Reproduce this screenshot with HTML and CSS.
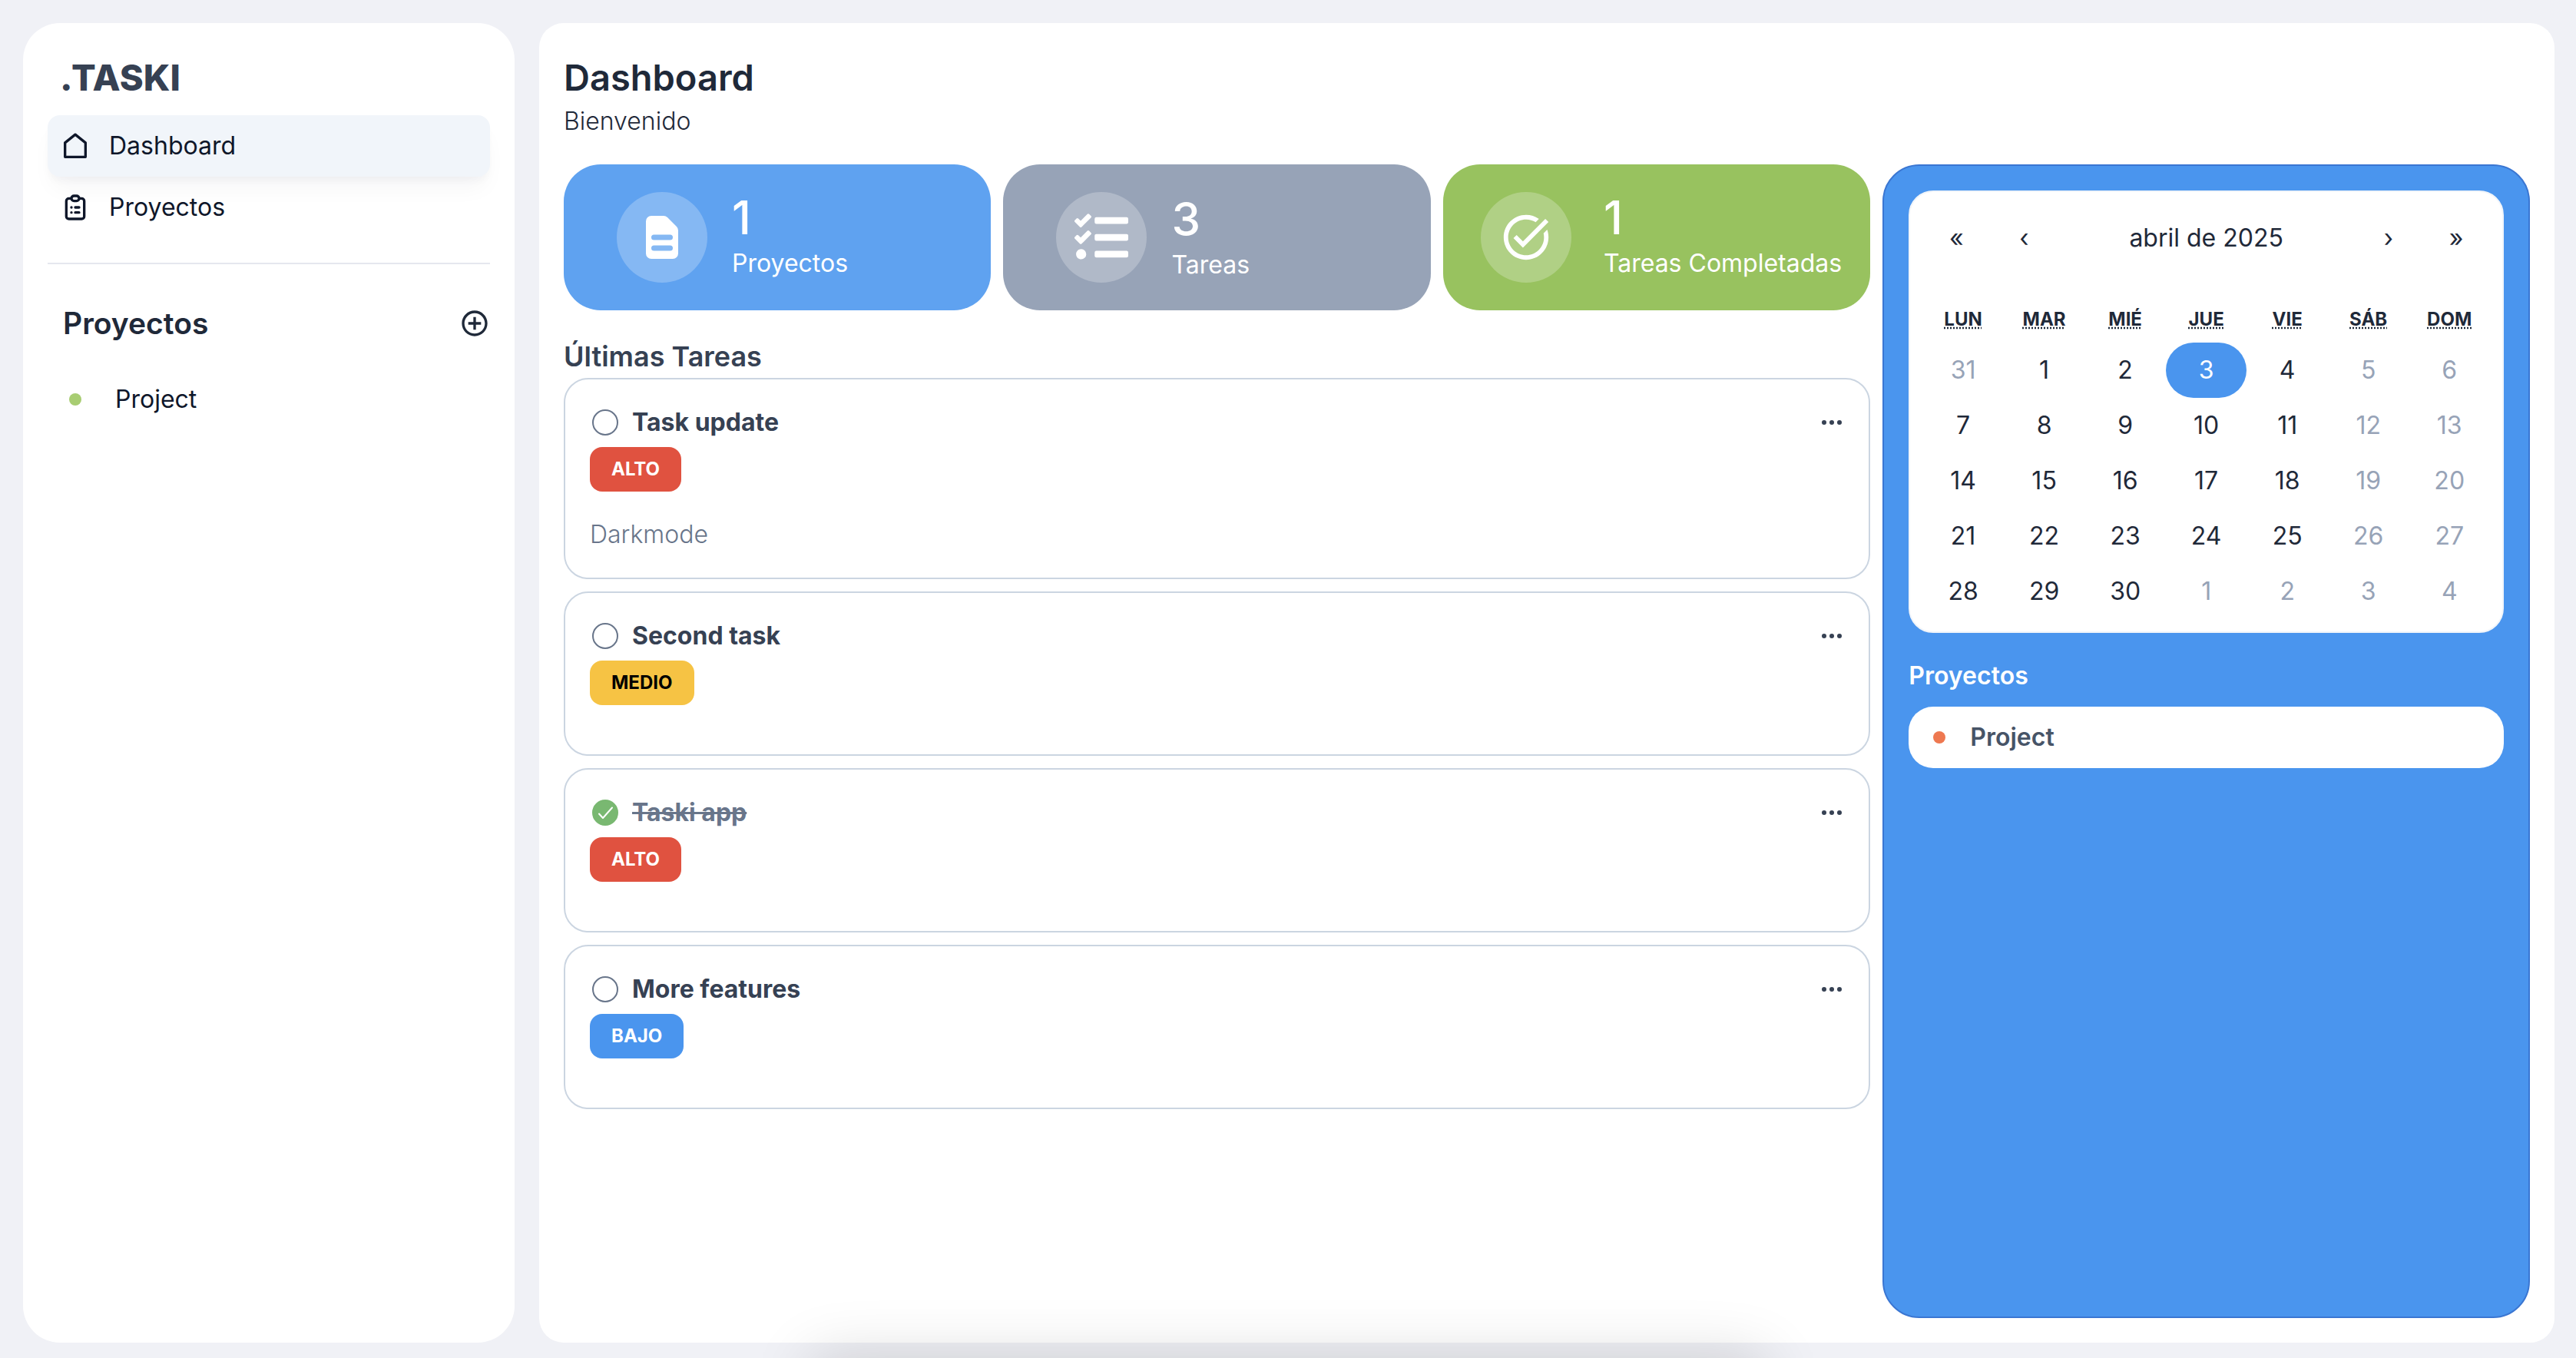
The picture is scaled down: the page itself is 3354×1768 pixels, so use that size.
FILE: index.html
```html
<!DOCTYPE html>
<html lang="es">
<head>
<meta charset="utf-8">
<meta name="viewport" content="width=device-width, initial-scale=1">
<title>Taski - Dashboard</title>
<link rel="stylesheet" href="styles.css">
</head>
<body>
<div class="app">
  <aside class="sidebar">
    <p class="logo">.TASKI</p>
    <nav class="nav">
      <a class="nav-link nav-link-active" href="#dashboard">
        <svg class="icon" viewBox="0 0 24 24" fill="none" stroke="currentColor" stroke-width="2" stroke-linejoin="round"><path d="M4 9.5V20.6h16V9.5L12 3.100z"/></svg>
        Dashboard
      </a>
      <a class="nav-link" href="#proyectos">
        <svg class="icon" viewBox="0 0 24 24" fill="none" stroke="currentColor" stroke-width="2" stroke-linecap="round" stroke-linejoin="round"><path d="M9 5H7a2 2 0 00-2 2v12a2 2 0 002 2h10a2 2 0 002-2V7a2 2 0 00-2-2h-2M9 5a2 2 0 002 2h2a2 2 0 002-2M9 5a2 2 0 012-2h2a2 2 0 012 2m-3 7h3m-3 4h3m-6-4h.01M9 16h.01"/></svg>
        Proyectos
      </a>
    </nav>
    <hr class="divider">
    <div class="side-head">
      <h2 class="side-title">Proyectos</h2>
      <button class="icon-btn" type="button" aria-label="Nuevo proyecto">
        <svg class="icon" viewBox="0 0 24 24" fill="currentColor"><path d="M13 7h-2v4H7v2h4v4h2v-4h4v-2h-4V7zm-1-5C6.480 2 2 6.480 2 12s4.480 10 10 10 10-4.480 10-10S17.520 2 12 2zm0 18c-4.410 0-8-3.590-8-8s3.590-8 8-8 8 3.590 8 8-3.590 8-8 8z"/></svg>
      </button>
    </div>
    <a class="side-project" href="#project"><span class="dot dot-green"></span>Project</a>
  </aside>

  <main class="main">
    <header class="header">
      <h1 class="title">Dashboard</h1>
      <p class="welcome">Bienvenido</p>
    </header>
    <div class="columns">
      <div class="left">
        <section class="stats">
          <div class="stat stat-blue">
            <span class="stat-icon"><svg viewBox="0 0 20 20" fill="currentColor"><path fill-rule="evenodd" d="M4 4a2 2 0 012-2h4.586A2 2 0 0112 2.586L15.414 6A2 2 0 0116 7.414V16a2 2 0 01-2 2H6a2 2 0 01-2-2V4zm2 6a1 1 0 011-1h6a1 1 0 110 2H7a1 1 0 01-1-1zm1 3a1 1 0 100 2h6a1 1 0 100-2H7z"/></svg></span>
            <div class="stat-text"><p class="stat-num">1</p><p class="stat-label">Proyectos</p></div>
          </div>
          <div class="stat stat-gray">
            <span class="stat-icon"><svg viewBox="0 0 512 512" fill="currentColor"><path d="M139.610 35.500a12 12 0 0 0-17 0L58.930 98.810l-22.700-22.120a12 12 0 0 0-17 0L3.530 92.410a12 12 0 0 0 0 17l47.590 47.400a12.780 12.780 0 0 0 17.610 0l15.590-15.620L156.520 69a12.090 12.090 0 0 0 .09-17zm0 159.190a12 12 0 0 0-17 0l-63.680 63.720-22.700-22.100a12 12 0 0 0-17 0L3.530 252a12 12 0 0 0 0 17L51 316.500a12.770 12.770 0 0 0 17.600 0l15.700-15.690 72.200-72.220a12 12 0 0 0 .09-16.900zM64 368c-26.490 0-48.590 21.500-48.590 48S37.530 464 64 464a48 48 0 0 0 0-96zm432 16H208a16 16 0 0 0-16 16v32a16 16 0 0 0 16 16h288a16 16 0 0 0 16-16v-32a16 16 0 0 0-16-16zm0-320H208a16 16 0 0 0-16 16v32a16 16 0 0 0 16 16h288a16 16 0 0 0 16-16V80a16 16 0 0 0-16-16zm0 160H208a16 16 0 0 0-16 16v32a16 16 0 0 0 16 16h288a16 16 0 0 0 16-16v-32a16 16 0 0 0-16-16z"/></svg></span>
            <div><p class="stat-num">3</p><p class="stat-label">Tareas</p></div>
          </div>
          <div class="stat stat-green">
            <span class="stat-icon"><svg viewBox="0 0 24 24" fill="currentColor"><path d="M22 5.180 10.590 16.600l-4.240-4.240 1.410-1.410 2.830 2.830 10-10L22 5.180zm-2.210 5.040c.13.57.21 1.170.21 1.780 0 4.420-3.580 8-8 8s-8-3.580-8-8 3.580-8 8-8c1.580 0 3.040.46 4.280 1.250l1.440-1.440A9.900 9.900 0 0 0 12 2C6.480 2 2 6.480 2 12s4.480 10 10 10 10-4.480 10-10c0-1.190-.22-2.330-.6-3.390l-1.610 1.610z"/></svg></span>
            <div class="stat-text"><p class="stat-num">1</p><p class="stat-label">Tareas Completadas</p></div>
          </div>
        </section>

        <h2 class="section-title">Últimas Tareas</h2>
        <div class="tasks">
          <article class="task">
            <div class="task-head">
              <input class="check" type="checkbox" id="t1"><label class="task-name" for="t1">Task update</label>
              <button class="icon-btn more" type="button" aria-label="Opciones"><svg class="dots" viewBox="0 0 16 16" fill="currentColor"><circle cx="3" cy="8" r="1.500"/><circle cx="8" cy="8" r="1.500"/><circle cx="13" cy="8" r="1.500"/></svg></button>
            </div>
            <span class="badge badge-high">ALTO</span>
            <p class="task-text">Darkmode</p>
          </article>
          <article class="task">
            <div class="task-head">
              <input class="check" type="checkbox" id="t2"><label class="task-name" for="t2">Second task</label>
              <button class="icon-btn more" type="button" aria-label="Opciones"><svg class="dots" viewBox="0 0 16 16" fill="currentColor"><circle cx="3" cy="8" r="1.500"/><circle cx="8" cy="8" r="1.500"/><circle cx="13" cy="8" r="1.500"/></svg></button>
            </div>
            <span class="badge badge-mid">MEDIO</span>
            <p class="task-text"></p>
          </article>
          <article class="task">
            <div class="task-head">
              <span class="check-wrap">
                <input class="check" type="checkbox" id="t3" checked>
                <svg class="check-mark" viewBox="0 0 34 34" fill="none" stroke="currentColor" stroke-width="2" stroke-linecap="round" stroke-linejoin="round"><path d="M9 18.500l5 5.500L26 10.500"/></svg>
              </span><label class="task-name" for="t3">Taski app</label>
              <button class="icon-btn more" type="button" aria-label="Opciones"><svg class="dots" viewBox="0 0 16 16" fill="currentColor"><circle cx="3" cy="8" r="1.500"/><circle cx="8" cy="8" r="1.500"/><circle cx="13" cy="8" r="1.500"/></svg></button>
            </div>
            <span class="badge badge-high">ALTO</span>
            <p class="task-text"></p>
          </article>
          <article class="task">
            <div class="task-head">
              <input class="check" type="checkbox" id="t4"><label class="task-name" for="t4">More features</label>
              <button class="icon-btn more" type="button" aria-label="Opciones"><svg class="dots" viewBox="0 0 16 16" fill="currentColor"><circle cx="3" cy="8" r="1.500"/><circle cx="8" cy="8" r="1.500"/><circle cx="13" cy="8" r="1.500"/></svg></button>
            </div>
            <span class="badge badge-low">BAJO</span>
            <p class="task-text"></p>
          </article>
        </div>
      </div>

      <aside class="panel">
        <div class="calendar">
          <div class="cal-nav">
            <button class="cal-btn" type="button" aria-label="Año anterior">«</button>
            <button class="cal-btn" type="button" aria-label="Mes anterior">‹</button>
            <button class="cal-label" type="button">abril de 2025</button>
            <button class="cal-btn" type="button" aria-label="Mes siguiente">›</button>
            <button class="cal-btn" type="button" aria-label="Año siguiente">»</button>
          </div>
          <table class="cal-table">
            <thead><tr>
              <th><abbr title="lunes">LUN</abbr></th><th><abbr title="martes">MAR</abbr></th><th><abbr title="miércoles">MIÉ</abbr></th><th><abbr title="jueves">JUE</abbr></th><th><abbr title="viernes">VIE</abbr></th><th><abbr title="sábado">SÁB</abbr></th><th><abbr title="domingo">DOM</abbr></th>
            </tr></thead>
            <tbody>
              <tr><td><button class="day dim" type="button">31</button></td><td><button class="day" type="button">1</button></td><td><button class="day" type="button">2</button></td><td><button class="day today" type="button">3</button></td><td><button class="day" type="button">4</button></td><td><button class="day dim" type="button">5</button></td><td><button class="day dim" type="button">6</button></td></tr>
              <tr><td><button class="day" type="button">7</button></td><td><button class="day" type="button">8</button></td><td><button class="day" type="button">9</button></td><td><button class="day" type="button">10</button></td><td><button class="day" type="button">11</button></td><td><button class="day dim" type="button">12</button></td><td><button class="day dim" type="button">13</button></td></tr>
              <tr><td><button class="day" type="button">14</button></td><td><button class="day" type="button">15</button></td><td><button class="day" type="button">16</button></td><td><button class="day" type="button">17</button></td><td><button class="day" type="button">18</button></td><td><button class="day dim" type="button">19</button></td><td><button class="day dim" type="button">20</button></td></tr>
              <tr><td><button class="day" type="button">21</button></td><td><button class="day" type="button">22</button></td><td><button class="day" type="button">23</button></td><td><button class="day" type="button">24</button></td><td><button class="day" type="button">25</button></td><td><button class="day dim" type="button">26</button></td><td><button class="day dim" type="button">27</button></td></tr>
              <tr><td><button class="day" type="button">28</button></td><td><button class="day" type="button">29</button></td><td><button class="day" type="button">30</button></td><td><button class="day dim" type="button">1</button></td><td><button class="day dim" type="button">2</button></td><td><button class="day dim" type="button">3</button></td><td><button class="day dim" type="button">4</button></td></tr>
            </tbody>
          </table>
        </div>
        <h2 class="panel-title">Proyectos</h2>
        <a class="panel-project" href="#project"><span class="dot dot-orange"></span>Project</a>
      </aside>
    </div>
  </main>
</div>
<div class="tray"></div>
</body>
</html>
```

FILE: styles.css
```css
* {
  box-sizing: border-box;
  margin: 0;
  padding: 0;
}

body {
  background: #f0f1f6;
  color: #0f172a;
  font: 400 32px/48px Inter, "Liberation Sans", sans-serif;
}

a {
  color: inherit;
  text-decoration: none;
}

button {
  background: none;
  border: 0;
  color: inherit;
  font: inherit;
  cursor: pointer;
}

.app {
  display: grid;
  grid-template-columns: 640px 1fr;
  gap: 32px;
  min-height: 100vh;
  padding: 30px 28px 20px 30px;
}

/* Sidebar */
.sidebar {
  background: #fff;
  border-radius: 48px;
  padding: 32px;
}

.logo {
  padding-left: 16px;
  margin-bottom: 10px;
  color: #364153;
  font-size: 47px;
  font-weight: 800;
  line-height: 78px;
}

.nav-link {
  display: flex;
  align-items: center;
  gap: 24px;
  height: 80px;
  padding: 0 16px;
  border-radius: 16px;
}

.nav-link-active {
  background: #f1f5fa;
  box-shadow: 0 20px 30px -6px rgba(15, 23, 42, .04), 0 8px 12px -4px rgba(15, 23, 42, .04);
}

.icon {
  display: block;
  width: 40px;
  height: 40px;
}

.divider {
  height: 2px;
  margin: 32px 0;
  border: 0;
  background: #e5e7ee;
}

.side-head {
  display: flex;
  align-items: center;
  justify-content: space-between;
  height: 90px;
  margin-bottom: 14px;
  padding-left: 20px;
  color: #1f2939;
}

.side-title {
  font-size: 39px;
  font-weight: 600;
}

.side-project {
  display: flex;
  align-items: center;
  gap: 44px;
  height: 80px;
  padding: 0 28px;
}

.dot {
  flex: none;
  width: 16px;
  height: 16px;
  border-radius: 50%;
}

.dot-green {
  background: #a8cd72;
}

.dot-orange {
  background: #ee7850;
}

/* Main */
.main {
  display: flex;
  flex-direction: column;
  background: #fff;
  border-radius: 32px;
  padding: 32px;
}

.header {
  margin-bottom: 38px;
  color: #1f2939;
}

.title {
  font-size: 47px;
  font-weight: 600;
  line-height: 78px;
}

.welcome {
  font-weight: 300;
  line-height: 36px;
}

.columns {
  display: grid;
  flex: 1;
  grid-template-columns: repeat(3, 1fr);
  gap: 16px;
}

.left {
  grid-column: span 2;
}

.stats {
  display: grid;
  grid-template-columns: repeat(3, 1fr);
  gap: 16px;
}

.stat {
  display: flex;
  align-items: center;
  gap: 32px;
  height: 190px;
  padding-left: 69px;
  border-radius: 48px;
  color: #fff;
}

.stat-blue {
  background: #5fa2f0;
}

.stat-gray {
  background: #97a3b7;
}

.stat-green {
  gap: 42px;
  padding-left: 49px;
  background: #98c25f;
}

.stat-icon {
  display: grid;
  flex: none;
  place-items: center;
  width: 118px;
  height: 118px;
  border-radius: 50%;
  background: rgba(255, 255, 255, .24);
}

.stat-icon svg {
  width: 70px;
  height: 70px;
}

.stat-text {
  padding-bottom: 4px;
}

.stat-num {
  font-size: 60px;
  font-weight: 500;
  line-height: 72px;
}

.stat-label {
  white-space: nowrap;
}

.section-title {
  margin-top: 34px;
  margin-bottom: 2px;
  color: #364153;
  font-size: 36px;
  font-weight: 600;
  line-height: 52px;
}

.tasks {
  display: grid;
  gap: 16px;
}

.task {
  padding: 32px;
  border: 2px solid #cbd5e1;
  border-radius: 32px;
}

.task-head {
  display: flex;
  align-items: center;
  gap: 18px;
  padding-left: 3px;
  color: #364153;
}

.check {
  display: block;
  flex: none;
  width: 34px;
  height: 34px;
  appearance: none;
  border: 2px solid #68758a;
  border-radius: 50%;
}

.check:checked {
  border-color: #79b871;
  background: #79b871;
}

.check-wrap {
  position: relative;
}

.check-mark {
  position: absolute;
  inset: 0;
  color: #fff;
  pointer-events: none;
}

.task-name {
  font-weight: 700;
}

.check-wrap:has(:checked) + .task-name {
  color: #68758a;
  text-decoration: line-through;
}

.more {
  margin-left: auto;
}

.dots {
  display: block;
  width: 32px;
  height: 32px;
}

.badge {
  display: block;
  width: fit-content;
  margin-top: 8px;
  padding: 0 28px;
  border-radius: 16px;
  color: #fff;
  font-size: 24px;
  font-weight: 700;
  line-height: 58px;
}

.badge-high {
  background: #e05240;
}

.badge-mid {
  background: #f6c344;
  color: #000;
}

.badge-low {
  background: #4a95ee;
}

.task-text {
  min-height: 0;
  margin-top: 32px;
  color: #68758a;
  font-weight: 300;
}

/* Right panel */
.panel {
  padding: 32px;
  border: 2px solid #3a76d2;
  border-radius: 48px;
  background: #4a95ee;
}

.calendar {
  padding: 16px;
  border: 2px solid #f1f5fa;
  border-radius: 32px;
  background: #fff;
  color: #1f2939;
}

.cal-nav {
  display: flex;
  height: 88px;
  margin-bottom: 32px;
}

.cal-btn {
  width: 88px;
}

.cal-label {
  flex: 1;
}

.cal-table {
  width: 100%;
  table-layout: fixed;
  border-collapse: collapse;
}

.cal-table th {
  height: 60px;
  font-size: 24px;
  font-weight: 700;
  line-height: 36px;
}

.day {
  display: block;
  width: 100%;
  height: 72px;
  border-radius: 36px;
}

.dim {
  color: #97a3b7;
}

.today {
  background: #4a95ee;
  color: #fff;
}

.panel-title {
  margin: 32px 0 16px;
  color: #fff;
  font-size: 32px;
  font-weight: 600;
}

.panel-project {
  display: flex;
  align-items: center;
  gap: 32px;
  height: 80px;
  padding: 0 32px;
  border-radius: 32px;
  background: #fff;
  color: #475467;
  font-weight: 600;
}

/* Tray parked below the window; only its shadow shows */
.tray {
  position: fixed;
  top: 100%;
  left: 50%;
  width: 1240px;
  height: 160px;
  margin-left: -620px;
  box-shadow: 0 0 80px rgba(0, 0, 0, .16);
  pointer-events: none;
}
```
